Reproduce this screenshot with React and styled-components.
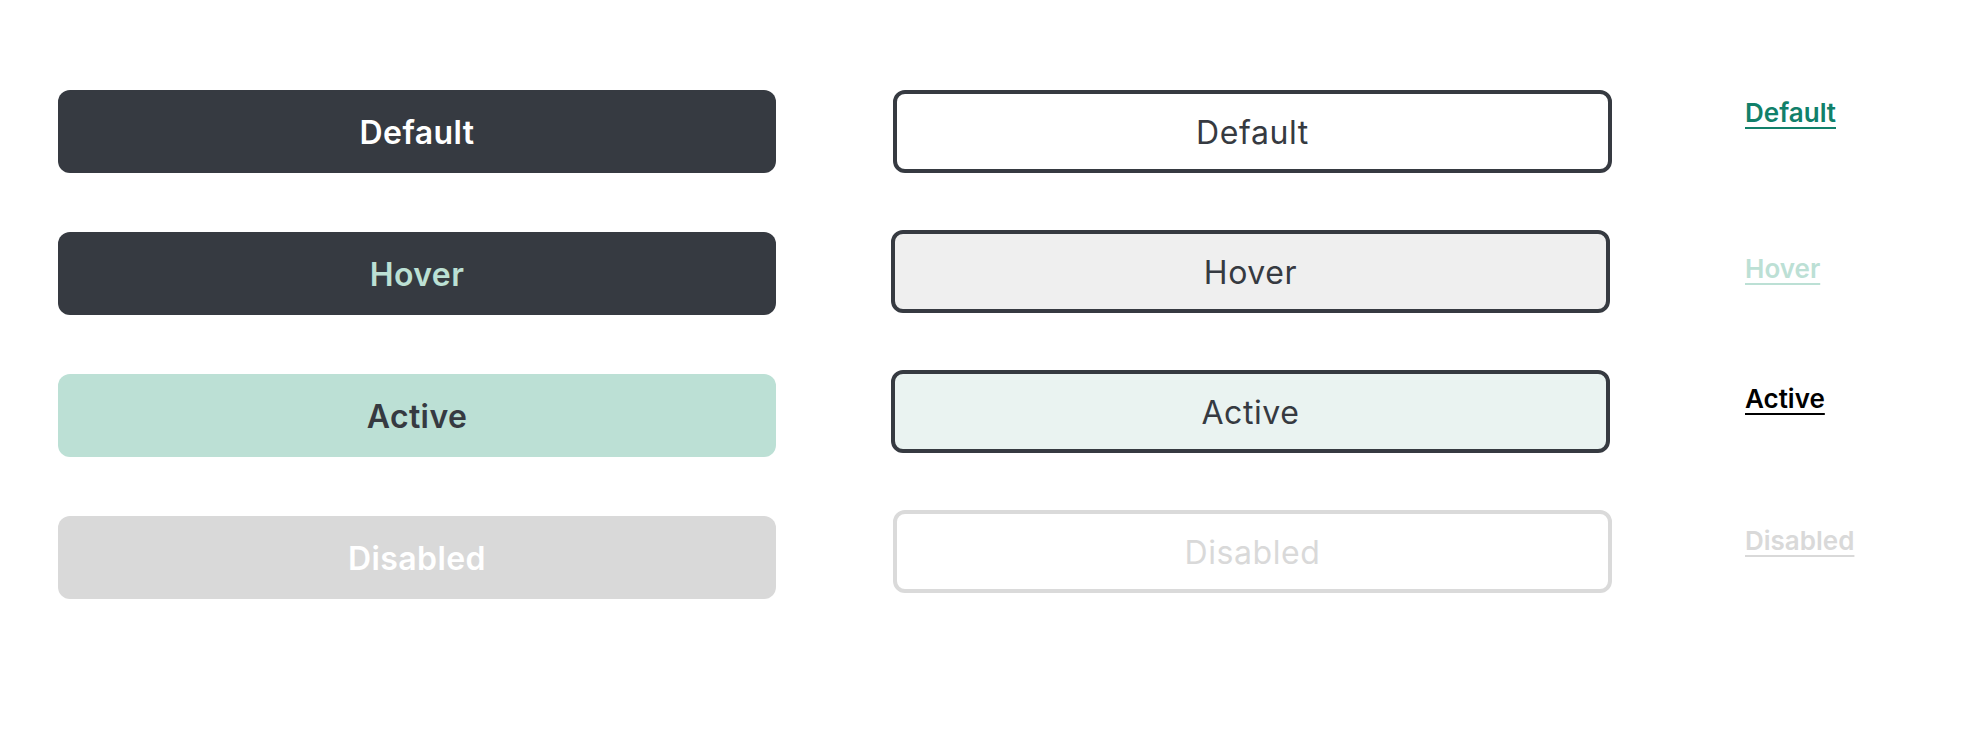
import React from "react";
import styled, { createGlobalStyle, css } from "styled-components";

const Global = createGlobalStyle`
  html, body { margin: 0; padding: 0; background: #ffffff; }
  body { font-family: Inter, "Noto Sans", sans-serif; -webkit-font-smoothing: antialiased; }
`;

const Page = styled.div`
  width: 1988px;
  height: 756px;
  box-sizing: border-box;
  padding: 90px 0 0 58px;
  display: flex;
  align-items: flex-start;
`;

const Column = styled.div`
  display: flex;
  flex-direction: column;
  gap: ${(p) => p.$gap}px;
  width: ${(p) => p.$width}px;
  margin-right: ${(p) => p.$after || 0}px;
`;

const solidVariants = {
  default: css`background: #363a41; color: #ffffff;`,
  hover: css`background: #363a41; color: #bce0d4;`,
  active: css`background: #bce0d5; color: #363a41;`,
  disabled: css`background: #d9d9d9; color: #ffffff;`,
};

const SolidButton = styled.button`
  all: unset;
  box-sizing: border-box;
  height: 83px;
  width: 100%;
  padding-top: 2px;
  border-radius: 12px;
  display: flex;
  align-items: center;
  justify-content: center;
  font-family: Inter, "Noto Sans", sans-serif;
  font-weight: 600;
  font-size: 32px;
  letter-spacing: 0.4px;
  ${(p) => solidVariants[p.$state]}
`;

const outlineVariants = {
  default: css`background: #ffffff; border-color: #363a41; color: #363a41;`,
  hover: css`background: #efefef; border-color: #363a41; color: #363a41; margin-left: -2px;`,
  active: css`background: #eaf3f1; border-color: #363a41; color: #363a41; margin-left: -2px;`,
  disabled: css`background: #ffffff; border-color: #dadada; color: #d9d9d9;`,
};

const OutlineButton = styled.button`
  all: unset;
  box-sizing: border-box;
  height: 83px;
  width: 100%;
  padding-top: 2px;
  border: 4px solid;
  border-radius: 12px;
  display: flex;
  align-items: center;
  justify-content: center;
  font-family: Inter, "Noto Sans", sans-serif;
  font-weight: 400;
  font-size: 32px;
  letter-spacing: 0.6px;
  ${(p) => outlineVariants[p.$state]}
`;

const linkColors = {
  default: "#11806a",
  hover: "#bce0d5",
  active: "#000000",
  disabled: "#d9d9d9",
};

const LinkColumn = styled.div`
  display: flex;
  flex-direction: column;
  align-items: flex-start;
`;

const TextLink = styled.a`
  display: inline-block;
  font-family: Inter, "Noto Sans", sans-serif;
  font-weight: 600;
  font-size: 26px;
  line-height: 32px;
  color: ${(p) => linkColors[p.$state]};
  text-decoration: underline;
  text-decoration-thickness: 2px;
  text-underline-offset: 5px;
  margin-top: ${(p) => p.$top}px;
  cursor: pointer;
`;

const states = [
  { key: "default", label: "Default", linkTop: 7 },
  { key: "hover", label: "Hover", linkTop: 124 },
  { key: "active", label: "Active", linkTop: 98 },
  { key: "disabled", label: "Disabled", linkTop: 110 },
];

export default function App() {
  return (
    <>
      <Global />
      <Page>
        <Column $width={718} $gap={59} $after={117}>
          {states.map((s) => (
            <SolidButton key={s.key} $state={s.key}>
              {s.label}
            </SolidButton>
          ))}
        </Column>
        <Column $width={719} $gap={57} $after={133}>
          {states.map((s) => (
            <OutlineButton key={s.key} $state={s.key}>
              {s.label}
            </OutlineButton>
          ))}
        </Column>
        <LinkColumn>
          {states.map((s) => (
            <TextLink key={s.key} $state={s.key} $top={s.linkTop}>
              {s.label}
            </TextLink>
          ))}
        </LinkColumn>
      </Page>
    </>
  );
}
